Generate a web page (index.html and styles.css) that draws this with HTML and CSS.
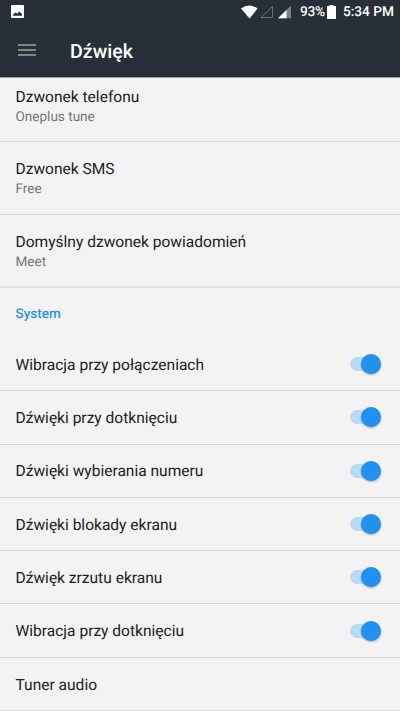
FILE: index.html
```html
<!DOCTYPE html>
<html lang="pl">
<head>
<meta charset="utf-8">
<title>Dźwięk</title>
<link rel="stylesheet" href="styles.css">
</head>
<body>
<header class="top">
  <div class="status">
    <svg class="photo" width="13" height="13" viewBox="0 0 13 13"><path fill="#fff" fill-rule="evenodd" d="M1 0h11q1 0 1 1v11q0 1-1 1H1q-1 0-1-1V1q0-1 1-1ZM2 10.700h9V9L8.500 6.500 6.500 8.500 4.500 7.500 2 9.500Z"/></svg>
    <svg class="signals" width="51" height="14" viewBox="0 0 51 14"><path fill="#fff" d="M0 3.500Q8-2.500 16.500 3.500L8.500 13.500Z"/><path fill="none" stroke="#6b7074" d="M31.500 1.500v11H20Z"/><path fill="#7b7f83" d="M50 .5v12.800H37Z"/><path fill="#fff" d="M45.500 5v8.300H37Z"/></svg>
    <span class="percent">93%</span>
    <svg class="battery" width="9" height="14" viewBox="0 0 9 14"><path fill="#fff" d="M2.500 0h4v1H9v13H0V1h2.500Z"/></svg>
    <span class="clock">5:34 PM</span>
  </div>
  <div class="bar">
    <svg class="menu" width="18" height="12" viewBox="0 0 18 12"><path stroke="#a4a199" stroke-width="1.700" d="M0 1h18M0 6h18M0 11h18"/></svg>
    <h1>Dźwięk</h1>
  </div>
</header>
<main>
  <section class="tones">
    <div class="tone"><div class="name">Dzwonek telefonu</div><div class="value">Oneplus tune</div></div>
    <div class="tone"><div class="name">Dzwonek SMS</div><div class="value">Free</div></div>
    <div class="tone"><div class="name">Domyślny dzwonek powiadomień</div><div class="value">Meet</div></div>
  </section>
  <h2>System</h2>
  <section class="options">
    <div class="row"><span class="name">Wibracja przy połączeniach</span><i class="switch"></i></div>
    <div class="row"><span class="name">Dźwięki przy dotknięciu</span><i class="switch"></i></div>
    <div class="row"><span class="name">Dźwięki wybierania numeru</span><i class="switch"></i></div>
    <div class="row"><span class="name">Dźwięki blokady ekranu</span><i class="switch"></i></div>
    <div class="row"><span class="name">Dźwięk zrzutu ekranu</span><i class="switch"></i></div>
    <div class="row"><span class="name">Wibracja przy dotknięciu</span><i class="switch"></i></div>
    <div class="row"><span class="name">Tuner audio</span></div>
  </section>
</main>
</body>
</html>
```
FILE: styles.css
```css
* { box-sizing: border-box; }
body { margin: 0; height: 711px; overflow: hidden; background: #f3f3f3; color: #212121; font-family: Roboto, sans-serif; text-rendering: geometricPrecision; }
.top { height: 78px; background: #272f38; color: #fff; border-bottom: 1px solid #a3a5a8; }
.status { height: 24px; display: flex; align-items: center; padding: 0 6px 0 11px; font-size: 13.700px; font-weight: 500; }
.photo { margin-top: -1px; }
.signals { margin-left: auto; margin-top: -1px; }
.percent { margin-left: 8px; letter-spacing: -.2px; }
.battery { margin-left: 2px; margin-top: -1px; }
.clock { margin-left: 7px; }
.bar { height: 53px; display: flex; align-items: center; padding-left: 18px; }
.menu { margin-top: -1px; }
h1 { margin: 2px 0 0 34px; font-size: 19.600px; line-height: 24px; font-weight: 500; }
.tone { height: 72.500px; padding-top: 17px; border-bottom: 1px solid #d8d8d8; padding-left: 15.500px; }
.tone:first-child { height: 64px; padding-top: 9px; }
.tone:last-child { height: 73.500px; border-bottom: 2px solid #e1e1e1; }
.name { font-size: 15.550px; line-height: 20px; }
.value { font-size: 13.550px; line-height: 21px; color: #757575; }
h2 { margin: 0; height: 50px; padding: 16px 15.500px 0; color: #2a92e6; font-size: 13.500px; line-height: 20px; font-weight: 500; }
.row { height: 53.300px; display: flex; align-items: center; justify-content: space-between; padding: 0 18px 0 15.500px; border-bottom: 1px solid #d8d8d8; }
.row .name { padding-top: 1.400px; }
.switch { position: relative; width: 32px; height: 20px; }
.switch::before { content: ""; position: absolute; left: 0; top: 3px; width: 28px; height: 14px; border-radius: 7px; background: #bbdaf5; }
.switch::after { content: ""; position: absolute; right: 1px; top: 0; width: 20px; height: 20px; border-radius: 50%; background: #2191ef; box-shadow: 0 1px 2px #0005; }
```
